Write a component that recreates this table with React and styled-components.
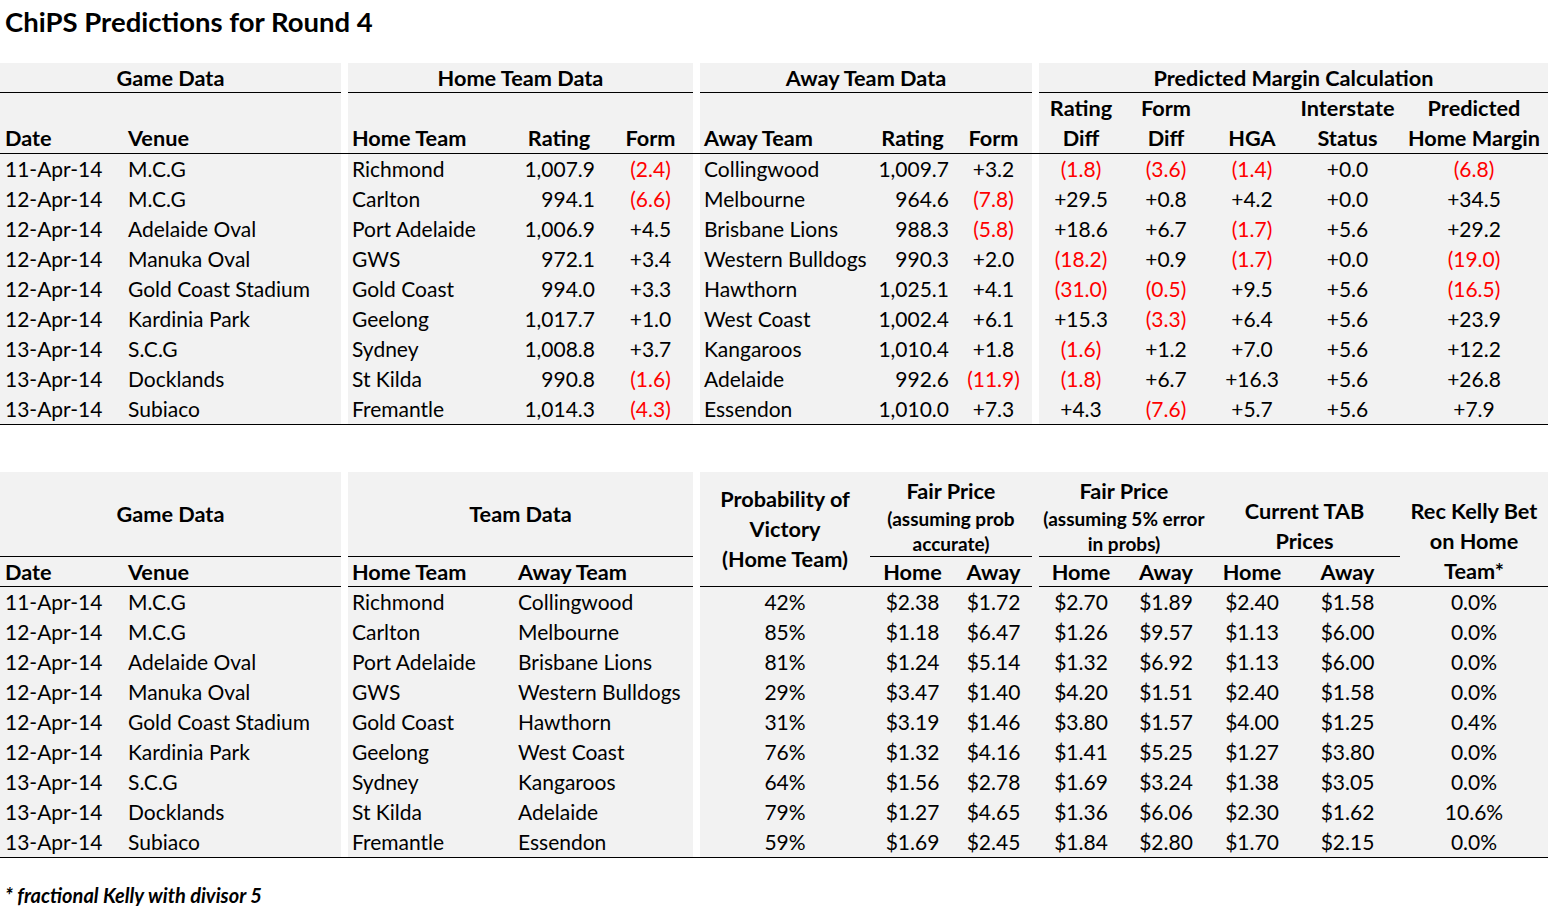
import React from 'react';
import styled, { createGlobalStyle } from 'styled-components';

const COLS = '123px 218px 7px 162px 98px 85px 7px 170px 85px 77px 7px 84px 86px 86px 105px 148px';
const FONT = 'Lato, "Open Sans", sans-serif';

const GlobalStyle = createGlobalStyle`
  * { box-sizing: border-box; }
  body {
    margin: 0;
    background: #fff;
    color: #000;
    font-family: ${FONT};
  }
`;

const Page = styled.div`
  width: 1548px;
  display: flex;
  flex-direction: column;
`;

const Title = styled.h1`
  margin: 0;
  padding-left: 5px;
  height: 63px;
  line-height: 44px;
  font-size: 27.5px;
  font-weight: 700;
`;

const Sheet = styled.div`
  display: flex;
  flex-direction: column;
  margin-bottom: ${(p) => p.$after || 0}px;
`;

const Row = styled.div`
  display: grid;
  grid-template-columns: ${COLS};
  grid-template-rows: ${(p) => p.$rows || '30px'};
  border-bottom: ${(p) => (p.$line ? '1px solid #000' : 'none')};
`;

const Cell = styled.div`
  grid-column: ${(p) => p.$col || 'auto'};
  grid-row: ${(p) => p.$row || 'auto'};
  background: ${(p) => (p.$gap ? '#fff' : '#f2f2f2')};
  border-bottom: ${(p) => (p.$line ? '1px solid #000' : 'none')};
  display: flex;
  flex-direction: column;
  justify-content: ${(p) => p.$v || 'center'};
  align-items: ${(p) => (p.$align === 'left' ? 'flex-start' : p.$align === 'right' ? 'flex-end' : 'center')};
  padding-left: ${(p) => p.$pl || 0}px;
  padding-right: ${(p) => p.$pr || 0}px;
  font-size: ${(p) => (p.$bold ? 21.7 : 21)}px;
  line-height: 30px;
  font-weight: ${(p) => (p.$bold ? 700 : 400)};
  color: ${(p) => (p.$red ? '#ff0000' : '#000')};
  white-space: nowrap;
  text-align: center;
`;

const Small = styled.span`
  font-size: 19px;
  line-height: 25px;
`;

const Note = styled.p`
  margin: 0;
  padding: 25px 0 0 5px;
  font-size: 20px;
  font-weight: 700;
  font-style: italic;
`;

const top = [
  ['11-Apr-14', 'M.C.G', 'Richmond', '1,007.9', '(2.4)', 'Collingwood', '1,009.7', '+3.2', '(1.8)', '(3.6)', '(1.4)', '+0.0', '(6.8)'],
  ['12-Apr-14', 'M.C.G', 'Carlton', '994.1', '(6.6)', 'Melbourne', '964.6', '(7.8)', '+29.5', '+0.8', '+4.2', '+0.0', '+34.5'],
  ['12-Apr-14', 'Adelaide Oval', 'Port Adelaide', '1,006.9', '+4.5', 'Brisbane Lions', '988.3', '(5.8)', '+18.6', '+6.7', '(1.7)', '+5.6', '+29.2'],
  ['12-Apr-14', 'Manuka Oval', 'GWS', '972.1', '+3.4', 'Western Bulldogs', '990.3', '+2.0', '(18.2)', '+0.9', '(1.7)', '+0.0', '(19.0)'],
  ['12-Apr-14', 'Gold Coast Stadium', 'Gold Coast', '994.0', '+3.3', 'Hawthorn', '1,025.1', '+4.1', '(31.0)', '(0.5)', '+9.5', '+5.6', '(16.5)'],
  ['12-Apr-14', 'Kardinia Park', 'Geelong', '1,017.7', '+1.0', 'West Coast', '1,002.4', '+6.1', '+15.3', '(3.3)', '+6.4', '+5.6', '+23.9'],
  ['13-Apr-14', 'S.C.G', 'Sydney', '1,008.8', '+3.7', 'Kangaroos', '1,010.4', '+1.8', '(1.6)', '+1.2', '+7.0', '+5.6', '+12.2'],
  ['13-Apr-14', 'Docklands', 'St Kilda', '990.8', '(1.6)', 'Adelaide', '992.6', '(11.9)', '(1.8)', '+6.7', '+16.3', '+5.6', '+26.8'],
  ['13-Apr-14', 'Subiaco', 'Fremantle', '1,014.3', '(4.3)', 'Essendon', '1,010.0', '+7.3', '+4.3', '(7.6)', '+5.7', '+5.6', '+7.9'],
];

const prices = [
  ['42%', '$2.38', '$1.72', '$2.70', '$1.89', '$2.40', '$1.58', '0.0%'],
  ['85%', '$1.18', '$6.47', '$1.26', '$9.57', '$1.13', '$6.00', '0.0%'],
  ['81%', '$1.24', '$5.14', '$1.32', '$6.92', '$1.13', '$6.00', '0.0%'],
  ['29%', '$3.47', '$1.40', '$4.20', '$1.51', '$2.40', '$1.58', '0.0%'],
  ['31%', '$3.19', '$1.46', '$3.80', '$1.57', '$4.00', '$1.25', '0.4%'],
  ['76%', '$1.32', '$4.16', '$1.41', '$5.25', '$1.27', '$3.80', '0.0%'],
  ['64%', '$1.56', '$2.78', '$1.69', '$3.24', '$1.38', '$3.05', '0.0%'],
  ['79%', '$1.27', '$4.65', '$1.36', '$6.06', '$2.30', '$1.62', '10.6%'],
  ['59%', '$1.69', '$2.45', '$1.84', '$2.80', '$1.70', '$2.15', '0.0%'],
];

const neg = (v) => v.startsWith('(');

function MarginTable() {
  return (
    <Sheet $after={47}>
      <Row>
        <Cell $col="1 / 3" $bold $line>Game Data</Cell>
        <Cell $gap />
        <Cell $col="4 / 7" $bold $line>Home Team Data</Cell>
        <Cell $gap />
        <Cell $col="8 / 11" $bold $line>Away Team Data</Cell>
        <Cell $gap />
        <Cell $col="12 / 17" $bold $line>Predicted Margin Calculation</Cell>
      </Row>
      <Row $rows="60px" $line>
        <Cell $bold $v="flex-end" $align="left" $pl={5}>Date</Cell>
        <Cell $bold $v="flex-end" $align="left" $pl={5}>Venue</Cell>
        <Cell $gap />
        <Cell $bold $v="flex-end" $align="left" $pl={4}>Home Team</Cell>
        <Cell $bold $v="flex-end">Rating</Cell>
        <Cell $bold $v="flex-end">Form</Cell>
        <Cell $gap />
        <Cell $bold $v="flex-end" $align="left" $pl={4}>Away Team</Cell>
        <Cell $bold $v="flex-end">Rating</Cell>
        <Cell $bold $v="flex-end">Form</Cell>
        <Cell $gap />
        <Cell $bold $v="flex-end">Rating<br />Diff</Cell>
        <Cell $bold $v="flex-end">Form<br />Diff</Cell>
        <Cell $bold $v="flex-end">HGA</Cell>
        <Cell $bold $v="flex-end">Interstate<br />Status</Cell>
        <Cell $bold $v="flex-end">Predicted<br />Home Margin</Cell>
      </Row>
      {top.map((r, i) => (
        <Row key={i} $line={i === top.length - 1}>
          <Cell $align="left" $pl={5}>{r[0]}</Cell>
          <Cell $align="left" $pl={5}>{r[1]}</Cell>
          <Cell $gap />
          <Cell $align="left" $pl={4}>{r[2]}</Cell>
          <Cell $align="right" $pr={13}>{r[3]}</Cell>
          <Cell $red={neg(r[4])}>{r[4]}</Cell>
          <Cell $gap />
          <Cell $align="left" $pl={4}>{r[5]}</Cell>
          <Cell $align="right" $pr={6}>{r[6]}</Cell>
          <Cell $red={neg(r[7])}>{r[7]}</Cell>
          <Cell $gap />
          {r.slice(8).map((v, j) => (
            <Cell key={j} $red={neg(v)}>{v}</Cell>
          ))}
        </Row>
      ))}
    </Sheet>
  );
}

function PriceTable() {
  return (
    <Sheet>
      <Row $rows="85px 30px">
        <Cell $col="1 / 3" $row="1" $bold $line>Game Data</Cell>
        <Cell $col="3" $row="1 / 3" $gap />
        <Cell $col="4 / 7" $row="1" $bold $line>Team Data</Cell>
        <Cell $col="7" $row="1 / 3" $gap />
        <Cell $col="8" $row="1 / 3" $bold $line>
          Probability of<br />Victory<br />(Home Team)
        </Cell>
        <Cell $col="9 / 11" $row="1" $bold $line $v="flex-end">
          Fair Price
          <Small>(assuming prob</Small>
          <Small>accurate)</Small>
        </Cell>
        <Cell $col="11" $row="1 / 3" />
        <Cell $col="12 / 14" $row="1" $bold $line $v="flex-end">
          Fair Price
          <Small>(assuming 5% error</Small>
          <Small>in probs)</Small>
        </Cell>
        <Cell $col="14 / 16" $row="1" $bold $line $v="flex-end">
          Current TAB<br />Prices
        </Cell>
        <Cell $col="16" $row="1 / 3" $bold $line $v="flex-end">
          Rec Kelly Bet<br />on Home<br />Team*
        </Cell>
        <Cell $col="1" $row="2" $bold $line $align="left" $pl={5}>Date</Cell>
        <Cell $col="2" $row="2" $bold $line $align="left" $pl={5}>Venue</Cell>
        <Cell $col="4" $row="2" $bold $line $align="left" $pl={4}>Home Team</Cell>
        <Cell $col="5 / 7" $row="2" $bold $line $align="left" $pl={8}>Away Team</Cell>
        <Cell $col="9" $row="2" $bold $line>Home</Cell>
        <Cell $col="10" $row="2" $bold $line>Away</Cell>
        <Cell $col="12" $row="2" $bold $line>Home</Cell>
        <Cell $col="13" $row="2" $bold $line>Away</Cell>
        <Cell $col="14" $row="2" $bold $line>Home</Cell>
        <Cell $col="15" $row="2" $bold $line>Away</Cell>
      </Row>
      {prices.map((p, i) => {
        const r = top[i];
        return (
          <Row key={i} $line={i === prices.length - 1}>
            <Cell $align="left" $pl={5}>{r[0]}</Cell>
            <Cell $align="left" $pl={5}>{r[1]}</Cell>
            <Cell $gap />
            <Cell $align="left" $pl={4}>{r[2]}</Cell>
            <Cell $col="5 / 7" $align="left" $pl={8}>{r[5]}</Cell>
            <Cell $gap />
            <Cell>{p[0]}</Cell>
            <Cell>{p[1]}</Cell>
            <Cell>{p[2]}</Cell>
            <Cell />
            <Cell>{p[3]}</Cell>
            <Cell>{p[4]}</Cell>
            <Cell>{p[5]}</Cell>
            <Cell>{p[6]}</Cell>
            <Cell>{p[7]}</Cell>
          </Row>
        );
      })}
    </Sheet>
  );
}

export default function App() {
  return (
    <Page>
      <GlobalStyle />
      <Title>ChiPS Predictions for Round 4</Title>
      <MarginTable />
      <PriceTable />
      <Note>* fractional Kelly with divisor 5</Note>
    </Page>
  );
}
